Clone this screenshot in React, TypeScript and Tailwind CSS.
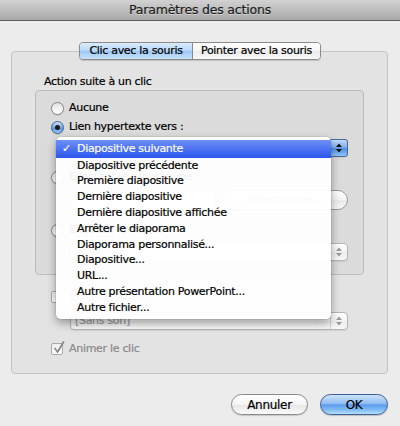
import React from "react";

function Radio({ checked = false, disabled = false }: { checked?: boolean; disabled?: boolean }) {
  return (
    <span
      className={`relative inline-block w-[13px] h-[13px] shrink-0 rounded-full border ${
        disabled ? "border-[#b0b0b0]" : checked ? "border-[#41628f]" : "border-[#848484]"
      } ${
        checked
          ? "bg-[linear-gradient(#cfe2f9,#7eaeea_45%,#5b95e2_55%,#9cc9f5)]"
          : "bg-[linear-gradient(#e4e4e4,#ffffff)]"
      } shadow-[0_1px_1px_rgba(0,0,0,0.12)]`}
    >
      {checked && (
        <span className="absolute left-[3px] top-[3px] w-[5px] h-[5px] rounded-full bg-[#1b1b1b]" />
      )}
    </span>
  );
}

function Checkbox({ checked = false }: { checked?: boolean }) {
  return (
    <span className="relative inline-block w-[12px] h-[12px] shrink-0 rounded-[2px] border border-[#a9a9a9] bg-[linear-gradient(#efefef,#ffffff)]">
      {checked && (
        <svg className="absolute left-[1px] top-[-3px]" width="12" height="13" viewBox="0 0 12 13">
          <path d="M2 7.5 L4.6 11 L10.5 1" fill="none" stroke="#8a8a8a" strokeWidth="1.8" strokeLinecap="round" strokeLinejoin="round" />
        </svg>
      )}
    </span>
  );
}

function Arrows({ color }: { color: string }) {
  return (
    <svg width="6" height="10" viewBox="0 0 6 10">
      <polygon points="0,4 3,0.5 6,4" fill={color} />
      <polygon points="0,6 3,9.5 6,6" fill={color} />
    </svg>
  );
}

function Popup({ text, active = false, disabled = false }: { text?: string; active?: boolean; disabled?: boolean }) {
  return (
    <div
      className={`flex h-[18px] rounded-[4px] border ${
        disabled ? "border-[#b5b5b5]" : "border-[#8c8c8c]"
      } bg-[linear-gradient(#ffffff,#f4f4f4_50%,#ececec_51%,#f8f8f8)] shadow-[0_1px_1px_rgba(0,0,0,0.08)]`}
    >
      <div className={`flex-1 pl-[4px] leading-[16px] text-[11px] ${disabled ? "text-[#9a9a9a]" : "text-black"}`}>
        {text}
      </div>
      <div
        className={`w-[17px] flex items-center justify-center rounded-r-[3px] ${
          active
            ? "bg-[linear-gradient(#c2dbf8,#7eb0ee_45%,#4f8fe3_55%,#92c6f7)] -my-px -mr-px border border-[#4a6a9c] w-[18px]"
            : "border-l border-[#d0d0d0]"
        }`}
      >
        <Arrows color={active ? "#111" : disabled ? "#9a9a9a" : "#333"} />
      </div>
    </div>
  );
}

const items = [
  "Diapositive précédente",
  "Première diapositive",
  "Dernière diapositive",
  "Dernière diapositive affichée",
  "Arrêter le diaporama",
  "Diaporama personnalisé...",
  "Diapositive...",
  "URL...",
  "Autre présentation PowerPoint...",
  "Autre fichier...",
];

export default function App() {
  return (
    <div className="relative w-[400px] h-[426px] overflow-hidden bg-[#ececec] font-['DejaVu_Sans',sans-serif] text-[11px] tracking-[-0.3px] text-black [-webkit-text-stroke:0.2px_currentColor]">
      {/* Title bar */}
      <div className="h-[21px] border-b border-[#5f5f5f] bg-[linear-gradient(#d2d2d2,#a8a8a8)] flex items-center justify-center">
        <span className="text-[12.5px] tracking-[-0.2px] text-[#1c1c1c] [text-shadow:0_1px_0_rgba(255,255,255,0.45)]">
          Paramètres des actions
        </span>
      </div>

      {/* Tabs */}
      <div className="relative z-10 mt-[21px] mx-auto w-[242px] h-[18px] flex rounded-[4px] border border-[#8a8a8a] overflow-hidden shadow-[0_1px_1px_rgba(0,0,0,0.15)]">
        <div className="w-[113px] flex items-center justify-center border-r border-[#8a8a8a] bg-[linear-gradient(#dcecfc,#b6d6f8_50%,#9cc6f4_51%,#c9e3fb)]">
          Clic avec la souris
        </div>
        <div className="flex-1 flex items-center justify-center bg-[linear-gradient(#ffffff,#f5f5f5_50%,#ebebeb_51%,#f8f8f8)]">
          Pointer avec la souris
        </div>
      </div>

      {/* Outer group box */}
      <div className="-mt-[9px] ml-[11px] w-[377px] h-[323px] rounded-[4px] border border-[#c4c4c4] bg-[#e3e3e3] pt-[23px] pl-[23px]">
        <div className="h-[14px] leading-[14px] ml-[9px]">Action suite à un clic</div>
        <div className="mt-[1px] w-[329px] h-[185px] rounded-[4px] border border-[#bcbcbc] bg-[#dbdbdb] pt-[9px] pl-[15px] pr-[15px]">
          <div className="h-[16px] flex items-center gap-[5px]">
            <Radio />
            <span>Aucune</span>
          </div>
          <div className="mt-[3px] h-[16px] flex items-center gap-[5px]">
            <Radio checked />
            <span>Lien hypertexte vers :</span>
          </div>
          <div className="mt-[4px] ml-[19px]">
            <Popup text="Diapositive suivante" active />
          </div>
          <div className="mt-[12px] h-[16px] flex items-center gap-[5px]">
            <Radio />
            <span>Exécuter le programme :</span>
          </div>
          <div className="mt-[5px] ml-[19px] h-[20px] flex gap-[7px]">
            <div className="flex-1 h-[20px] border border-[#c2c2c2] bg-white" />
            <div className="w-[126px] h-[20px] rounded-full border border-[#9a9a9a] bg-[linear-gradient(#ffffff,#f3f3f3_50%,#e9e9e9_51%,#f7f7f7)] flex items-center justify-center text-[#9a9a9a]">
              Sélectionner...
            </div>
          </div>
          <div className="mt-[12px] h-[16px] flex items-center gap-[5px]">
            <Radio />
            <span>Exécuter la macro :</span>
          </div>
          <div className="mt-[5px] ml-[19px]">
            <Popup disabled />
          </div>
        </div>

        <div className="mt-[14px] ml-[16px] h-[16px] flex items-center gap-[6px] text-[#8a8a8a]">
          <Checkbox />
          <span>Émettre un son :</span>
        </div>
        <div className="mt-[7px] ml-[35px] w-[278px]">
          <Popup text="[Sans son]" disabled />
        </div>
        <div className="mt-[11px] ml-[16px] h-[16px] flex items-center gap-[6px] text-[#8a8a8a]">
          <Checkbox checked />
          <span>Animer le clic</span>
        </div>
      </div>

      {/* Buttons */}
      <div className="mt-[20px] pr-[12px] flex justify-end gap-[12px] text-[12px]">
        <div className="w-[77px] h-[21px] rounded-full border border-[#8a8a8a] bg-[linear-gradient(#ffffff,#f4f4f4_50%,#e6e6e6_51%,#fafafa)] shadow-[0_1px_1px_rgba(0,0,0,0.15)] flex items-center justify-center">
          Annuler
        </div>
        <div className="w-[68px] h-[21px] rounded-full border border-[#3d5d98] bg-[linear-gradient(#cfe3fa,#8fbdf2_45%,#5c9bec_52%,#84bff6_80%,#b5e0fc)] shadow-[0_1px_1px_rgba(0,0,0,0.2)] flex items-center justify-center">
          OK
        </div>
      </div>

      {/* Open popup menu */}
      <div className="absolute left-[56px] top-[137px] w-[275px] h-[182px] rounded-[5px] bg-[rgba(255,255,255,0.95)] shadow-[0_4px_10px_rgba(0,0,0,0.35),0_0_0_1px_rgba(0,0,0,0.06)] pt-[3px]">
        <div className="relative h-[18px] bg-[linear-gradient(#6e90f6,#2b56ee)] text-white flex items-center pl-[21px]">
          <span className="absolute left-[6px] top-[1px] font-bold">✓</span>
          Diapositive suivante
        </div>
        {items.map((t) => (
          <div key={t} className="h-[15.8px] flex items-center pl-[21px]">
            {t}
          </div>
        ))}
      </div>
    </div>
  );
}
